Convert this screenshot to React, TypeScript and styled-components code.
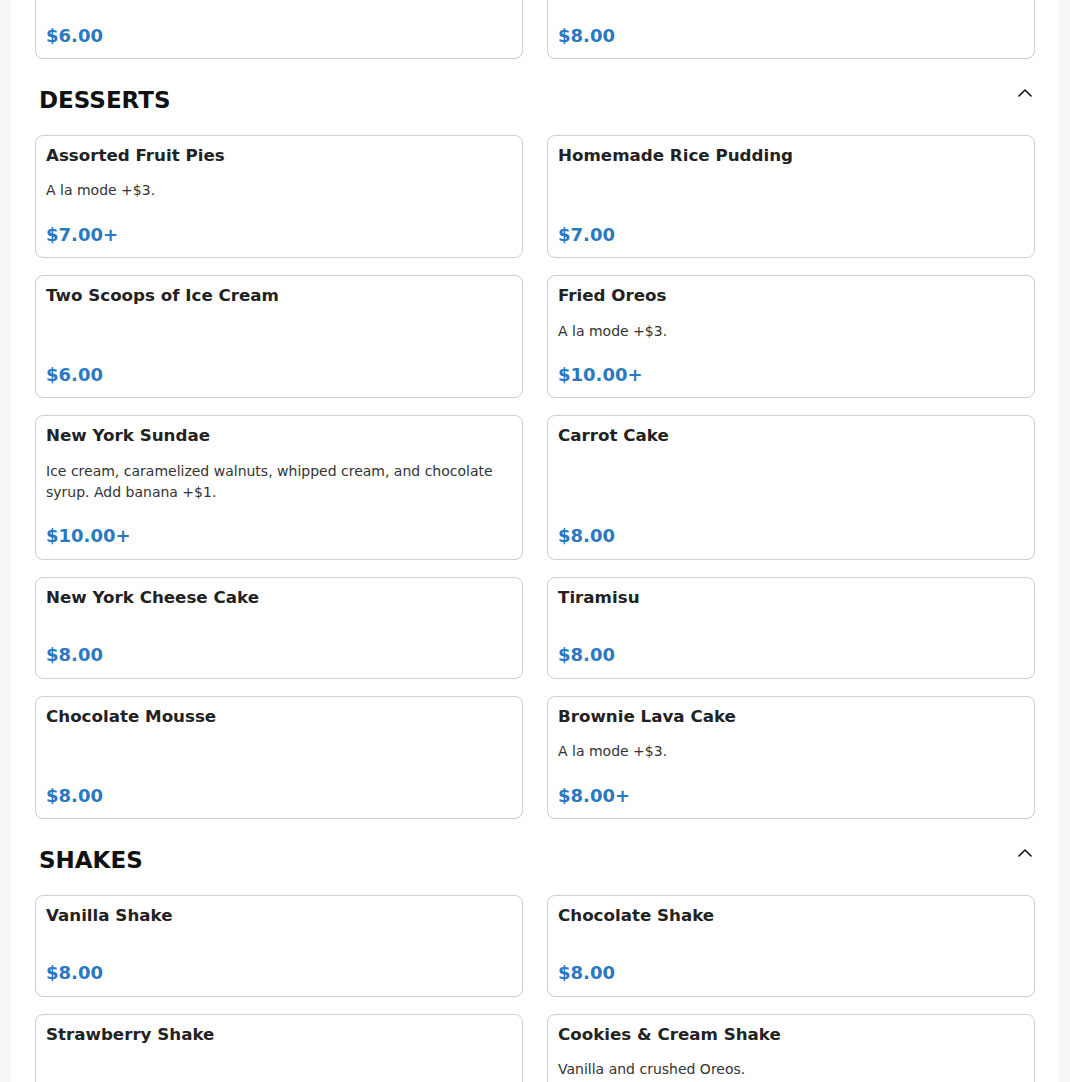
import React from "react";
import styled, { createGlobalStyle } from "styled-components";
import { ChevronUp } from "lucide-react";

const GlobalStyle = createGlobalStyle`
  html, body {
    margin: 0;
    padding: 0;
    background: #f7f7f7;
    font-family: "DejaVu Sans", "Noto Sans", sans-serif;
  }
  * { box-sizing: border-box; }
`;

type Item = { name: string; desc?: string; price: string };
type Section = { title: string; items: Item[]; hideHeader?: boolean };

const sections: Section[] = [
  {
    title: "SIDES",
    hideHeader: true,
    items: [
      { name: "Onion Rings", price: "$6.00" },
      { name: "Loaded Fries", price: "$8.00" },
    ],
  },
  {
    title: "DESSERTS",
    items: [
      { name: "Assorted Fruit Pies", desc: "A la mode +$3.", price: "$7.00+" },
      { name: "Homemade Rice Pudding", price: "$7.00" },
      { name: "Two Scoops of Ice Cream", price: "$6.00" },
      { name: "Fried Oreos", desc: "A la mode +$3.", price: "$10.00+" },
      {
        name: "New York Sundae",
        desc: "Ice cream, caramelized walnuts, whipped cream, and chocolate syrup. Add banana +$1.",
        price: "$10.00+",
      },
      { name: "Carrot Cake", price: "$8.00" },
      { name: "New York Cheese Cake", price: "$8.00" },
      { name: "Tiramisu", price: "$8.00" },
      { name: "Chocolate Mousse", price: "$8.00" },
      { name: "Brownie Lava Cake", desc: "A la mode +$3.", price: "$8.00+" },
    ],
  },
  {
    title: "SHAKES",
    items: [
      { name: "Vanilla Shake", price: "$8.00" },
      { name: "Chocolate Shake", price: "$8.00" },
      { name: "Strawberry Shake", price: "$8.00" },
      { name: "Cookies & Cream Shake", desc: "Vanilla and crushed Oreos.", price: "$9.00" },
    ],
  },
];

const Page = styled.main`
  background: #ffffff;
  margin: -43px 11px 0;
  padding: 0 24px 40px 24px;
  min-height: 1200px;
`;

const SectionBlock = styled.section`
  display: flex;
  flex-direction: column;
`;

const SectionHeader = styled.div`
  display: flex;
  justify-content: space-between;
  align-items: flex-start;
  padding-left: 4px;
  margin: 28px -2px 20px 0;
`;

const Heading = styled.h2`
  margin: 0;
  font-size: 23px;
  line-height: 1.2;
  font-weight: 700;
  color: #111;
`;

const Toggle = styled.button`
  display: flex;
  align-items: center;
  justify-content: center;
  width: 24px;
  height: 24px;
  padding: 0;
  margin-top: -6px;
  border: none;
  background: transparent;
  color: #111;
  cursor: pointer;
`;

const Grid = styled.div`
  display: grid;
  grid-template-columns: 1fr 1fr;
  column-gap: 24px;
  row-gap: 17px;
`;

const Card = styled.article`
  display: flex;
  flex-direction: column;
  border: 1px solid #cfcfcf;
  border-radius: 8px;
  padding: 9px 10px 12px;
  background: #fff;
`;

const Title = styled.h3`
  margin: 0;
  font-size: 16.7px;
  line-height: 20.4px;
  font-weight: 700;
  color: #222;
`;

const Desc = styled.p`
  margin: 15px 0 22.25px;
  font-size: 14px;
  line-height: 21px;
  color: #333;
`;

const Price = styled.div`
  margin-top: auto;
  font-size: 18px;
  line-height: 1.2;
  font-weight: 700;
  color: #2a78c0;
`;

function MenuCard({ item }: { item: Item }) {
  return (
    <Card>
      <Title>{item.name}</Title>
      <Desc>{item.desc ?? ""}</Desc>
      <Price>{item.price}</Price>
    </Card>
  );
}

export default function App() {
  return (
    <>
      <GlobalStyle />
      <Page>
        {sections.map((s) => (
          <SectionBlock key={s.title}>
            {!s.hideHeader && (
              <SectionHeader>
                <Heading>{s.title}</Heading>
                <Toggle aria-label="Collapse section">
                  <ChevronUp size={24} strokeWidth={1.6} />
                </Toggle>
              </SectionHeader>
            )}
            <Grid>
              {s.items.map((it) => (
                <MenuCard key={it.name} item={it} />
              ))}
            </Grid>
          </SectionBlock>
        ))}
      </Page>
    </>
  );
}
